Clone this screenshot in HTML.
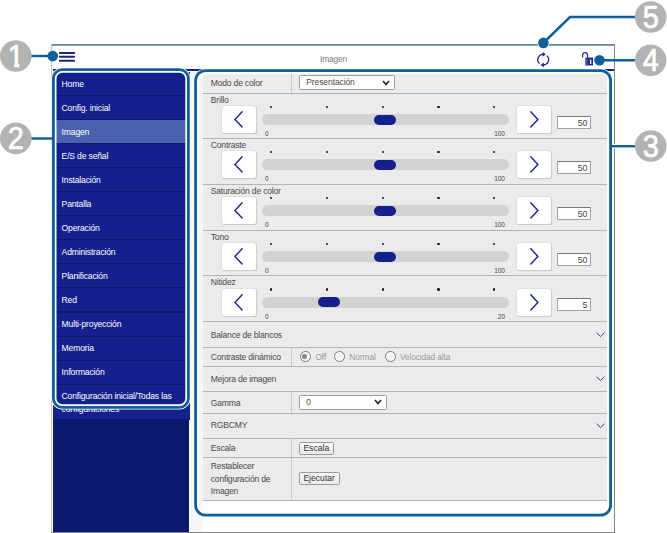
<!DOCTYPE html>
<html><head><meta charset="utf-8">
<style>
*{box-sizing:border-box;margin:0;padding:0}
html,body{width:667px;height:533px;background:#fff;overflow:hidden;font-family:"Liberation Sans",sans-serif;}
#root{position:relative;width:667px;height:533px;overflow:hidden}
.abs{position:absolute}
#frame{left:51.3px;top:44px;width:563.7px;height:488.5px;border:1px solid #8a8587;border-left:1.8px solid #c6c2bf;border-top:0;background:#fff}
#ftop{left:52px;top:44px;width:563px;height:1.7px;background:linear-gradient(#5b7a96,#8fa6be)}
#hdrline{left:53px;top:69px;width:561px;height:2.4px;background:#14208c}
#title{left:53px;top:54.3px;width:561px;text-align:center;font-size:8.4px;color:#7a7a7a;line-height:11px;letter-spacing:-0.15px}
#side{left:53.1px;top:71.5px;width:136.4px;height:460px;background:#0b1a6c}
.mi{position:absolute;left:0;width:136.5px;height:24.02px;background:#14208c;border-bottom:1px solid #0c1670;color:#fff;font-size:8.6px;line-height:10px;padding:6.7px 0 0 8.5px;white-space:nowrap;letter-spacing:-0.18px}
.mi.sel{background:#4a62ae}
#gutter{left:189.5px;top:71.5px;width:13.5px;height:460px;background:#f6f6f6}
#tbl{left:203px;top:71.5px;width:404px;height:429px;background:#ebebeb;border-radius:6px 6px 0 0}
.sep{position:absolute;left:0;width:404px;height:1px;background:#b4b4b4}
.lbl{position:absolute;left:7.8px;font-size:8.6px;letter-spacing:-0.22px;color:#4a4a4a;line-height:10px;white-space:nowrap}
.slbl{position:absolute;left:7.8px;font-size:8.6px;letter-spacing:-0.22px;color:#4a4a4a;line-height:10px;white-space:nowrap}
.btn{position:absolute;width:34.2px;height:27px;background:#fff;border-radius:2.5px;box-shadow:0 0 0 0.6px #d9d9d9,0.4px 0.9px 0.8px #bcbcbc}
.btn svg{display:block}
.track{position:absolute;left:59px;width:247px;height:11px;border-radius:5.5px;background:#d2d2d2}
.thumb{position:absolute;width:22px;height:10px;border-radius:5px;background:#14218c}
.dot{position:absolute;width:2.4px;height:2.4px;background:#1a1a1a;border-radius:50%}
.num{position:absolute;font-size:6.5px;color:#444;line-height:7px}
.inp{position:absolute;left:354px;width:34px;height:13.3px;background:#fff;border:1px solid #a2a2a2;border-top-color:#7a7a7a;border-radius:1px;font-size:8.8px;line-height:13.2px;text-align:right;padding-right:2.8px;color:#444;letter-spacing:-0.2px}
.vsep{position:absolute;left:87.7px;width:1px;background:#c9c9c9}
.sel{}
.selbox{position:absolute;left:95.8px;width:96px;height:15px;background:#fff;border:1px solid #9c9c9c;border-radius:1.5px;font-size:8.5px;line-height:13px;padding-left:6.5px;color:#4a4a4a;letter-spacing:-0.1px}
.pbtn{position:absolute;left:95.8px;height:13px;background:linear-gradient(#f8f8f8,#e9e9e9);border:1px solid #9a9a9a;border-radius:1.5px;font-size:8.6px;line-height:11px;padding:0 3.6px;color:#333}
.radio{position:absolute;width:10.6px;height:10.6px;border:1.4px solid #7e7e7e;border-radius:50%;background:#f4f4f4}
.rl{position:absolute;font-size:8.3px;color:#9a9a9a;line-height:10px;white-space:nowrap;letter-spacing:-0.1px}
.cn{font-family:"Liberation Sans",sans-serif}
</style></head><body>
<div id="root">
<div id="frame" class="abs"></div>
<div id="ftop" class="abs"></div>
<div id="title" class="abs">Imagen</div>
<div id="hdrline" class="abs"></div>
<div id="side" class="abs">
<div class="mi" style="top:0.80px">Home</div>
<div class="mi" style="top:24.82px">Config. inicial</div>
<div class="mi sel" style="top:48.84px">Imagen</div>
<div class="mi" style="top:72.86px">E/S de señal</div>
<div class="mi" style="top:96.88px">Instalación</div>
<div class="mi" style="top:120.90px">Pantalla</div>
<div class="mi" style="top:144.92px">Operación</div>
<div class="mi" style="top:168.94px">Administración</div>
<div class="mi" style="top:192.96px">Planificación</div>
<div class="mi" style="top:216.98px">Red</div>
<div class="mi" style="top:241.00px">Multi-proyección</div>
<div class="mi" style="top:265.02px">Memoria</div>
<div class="mi" style="top:289.04px">Información</div>
<div class="mi" style="top:313.06px;height:35.7px;white-space:normal;line-height:13px;padding-top:5.6px">Configuración inicial/Todas las configuraciones</div>
</div>
<div id="gutter" class="abs"></div>
<div id="tbl" class="abs">
<div class="lbl" style="top:6.0px">Modo de color</div>
<div class="vsep" style="top:0;height:21.7px"></div>
<div class="selbox" style="top:3.5px">Presentación<svg style="position:absolute;right:4px;top:3.5px" width="8" height="6" viewBox="0 0 8 6"><path d="M1 1 L4 4.5 L7 1" fill="none" stroke="#222" stroke-width="1.6"/></svg></div>
<div class="sep" style="top:21.4px"></div>
<div class="slbl" style="top:23.3px">Brillo</div>
<div class="btn" style="left:19px;top:34.9px"><svg width="34" height="27" viewBox="0 0 34 27"><path d="M20.1 5.8 L13.0 13.4 L20.1 21.0" fill="none" stroke="#1a2296" stroke-width="1.4" stroke-linecap="round"/></svg></div>
<div class="btn" style="left:313.8px;top:34.9px"><svg width="34" height="27" viewBox="0 0 34 27"><path d="M13.8 5.8 L20.9 13.4 L13.8 21.0" fill="none" stroke="#1a2296" stroke-width="1.4" stroke-linecap="round"/></svg></div>
<div class="track" style="top:42.6px"></div>
<div class="thumb" style="left:170.8px;top:43.1px"></div>
<div class="dot" style="left:66.9px;top:34.5px"></div>
<div class="dot" style="left:122.7px;top:34.5px"></div>
<div class="dot" style="left:178.5px;top:34.5px"></div>
<div class="dot" style="left:234.3px;top:34.5px"></div>
<div class="dot" style="left:290.1px;top:34.5px"></div>
<div class="num" style="left:62.0px;top:58.7px">0</div>
<div class="num" style="left:282.0px;top:58.7px;width:20px;text-align:right">100</div>
<div class="inp" style="top:44.3px">50</div>
<div class="sep" style="top:66.4px"></div>
<div class="slbl" style="top:68.3px">Contraste</div>
<div class="btn" style="left:19px;top:79.9px"><svg width="34" height="27" viewBox="0 0 34 27"><path d="M20.1 5.8 L13.0 13.4 L20.1 21.0" fill="none" stroke="#1a2296" stroke-width="1.4" stroke-linecap="round"/></svg></div>
<div class="btn" style="left:313.8px;top:79.9px"><svg width="34" height="27" viewBox="0 0 34 27"><path d="M13.8 5.8 L20.9 13.4 L13.8 21.0" fill="none" stroke="#1a2296" stroke-width="1.4" stroke-linecap="round"/></svg></div>
<div class="track" style="top:87.6px"></div>
<div class="thumb" style="left:170.8px;top:88.1px"></div>
<div class="dot" style="left:66.9px;top:79.5px"></div>
<div class="dot" style="left:122.7px;top:79.5px"></div>
<div class="dot" style="left:178.5px;top:79.5px"></div>
<div class="dot" style="left:234.3px;top:79.5px"></div>
<div class="dot" style="left:290.1px;top:79.5px"></div>
<div class="num" style="left:62.0px;top:103.7px">0</div>
<div class="num" style="left:282.0px;top:103.7px;width:20px;text-align:right">100</div>
<div class="inp" style="top:89.3px">50</div>
<div class="sep" style="top:112.4px"></div>
<div class="slbl" style="top:114.3px">Saturación de color</div>
<div class="btn" style="left:19px;top:125.9px"><svg width="34" height="27" viewBox="0 0 34 27"><path d="M20.1 5.8 L13.0 13.4 L20.1 21.0" fill="none" stroke="#1a2296" stroke-width="1.4" stroke-linecap="round"/></svg></div>
<div class="btn" style="left:313.8px;top:125.9px"><svg width="34" height="27" viewBox="0 0 34 27"><path d="M13.8 5.8 L20.9 13.4 L13.8 21.0" fill="none" stroke="#1a2296" stroke-width="1.4" stroke-linecap="round"/></svg></div>
<div class="track" style="top:133.6px"></div>
<div class="thumb" style="left:170.8px;top:134.1px"></div>
<div class="dot" style="left:66.9px;top:125.5px"></div>
<div class="dot" style="left:122.7px;top:125.5px"></div>
<div class="dot" style="left:178.5px;top:125.5px"></div>
<div class="dot" style="left:234.3px;top:125.5px"></div>
<div class="dot" style="left:290.1px;top:125.5px"></div>
<div class="num" style="left:62.0px;top:149.7px">0</div>
<div class="num" style="left:282.0px;top:149.7px;width:20px;text-align:right">100</div>
<div class="inp" style="top:135.3px">50</div>
<div class="sep" style="top:158.4px"></div>
<div class="slbl" style="top:160.3px">Tono</div>
<div class="btn" style="left:19px;top:171.9px"><svg width="34" height="27" viewBox="0 0 34 27"><path d="M20.1 5.8 L13.0 13.4 L20.1 21.0" fill="none" stroke="#1a2296" stroke-width="1.4" stroke-linecap="round"/></svg></div>
<div class="btn" style="left:313.8px;top:171.9px"><svg width="34" height="27" viewBox="0 0 34 27"><path d="M13.8 5.8 L20.9 13.4 L13.8 21.0" fill="none" stroke="#1a2296" stroke-width="1.4" stroke-linecap="round"/></svg></div>
<div class="track" style="top:179.6px"></div>
<div class="thumb" style="left:170.8px;top:180.1px"></div>
<div class="dot" style="left:66.9px;top:171.5px"></div>
<div class="dot" style="left:122.7px;top:171.5px"></div>
<div class="dot" style="left:178.5px;top:171.5px"></div>
<div class="dot" style="left:234.3px;top:171.5px"></div>
<div class="dot" style="left:290.1px;top:171.5px"></div>
<div class="num" style="left:62.0px;top:195.7px">0</div>
<div class="num" style="left:282.0px;top:195.7px;width:20px;text-align:right">100</div>
<div class="inp" style="top:181.3px">50</div>
<div class="sep" style="top:203.8px"></div>
<div class="slbl" style="top:205.7px">Nitidez</div>
<div class="btn" style="left:19px;top:217.3px"><svg width="34" height="27" viewBox="0 0 34 27"><path d="M20.1 5.8 L13.0 13.4 L20.1 21.0" fill="none" stroke="#1a2296" stroke-width="1.4" stroke-linecap="round"/></svg></div>
<div class="btn" style="left:313.8px;top:217.3px"><svg width="34" height="27" viewBox="0 0 34 27"><path d="M13.8 5.8 L20.9 13.4 L13.8 21.0" fill="none" stroke="#1a2296" stroke-width="1.4" stroke-linecap="round"/></svg></div>
<div class="track" style="top:225.0px"></div>
<div class="thumb" style="left:114.5px;top:225.5px"></div>
<div class="dot" style="left:66.9px;top:216.9px"></div>
<div class="dot" style="left:122.7px;top:216.9px"></div>
<div class="dot" style="left:178.5px;top:216.9px"></div>
<div class="dot" style="left:234.3px;top:216.9px"></div>
<div class="dot" style="left:290.1px;top:216.9px"></div>
<div class="num" style="left:62.0px;top:241.1px">0</div>
<div class="num" style="left:282.0px;top:241.1px;width:20px;text-align:right">20</div>
<div class="inp" style="top:226.7px">5</div>
<div class="sep" style="top:249.3px"></div>
<div class="lbl" style="top:258.0px">Balance de blancos</div>
<svg style="position:absolute;left:392.5px;top:260.5px" width="9" height="6" viewBox="0 0 9 6"><path d="M0.6 0.8 L4.5 4.6 L8.4 0.8" fill="none" stroke="#2a3aa6" stroke-width="1"/></svg>
<div class="sep" style="top:275.5px"></div>
<div class="lbl" style="top:280.0px">Contraste dinámico</div>
<div class="vsep" style="top:275.5px;height:19.0px"></div>
<div class="radio" style="left:97.0px;top:279.8px"><div style="position:absolute;left:1.4px;top:1.4px;width:5px;height:5px;border-radius:50%;background:#858585"></div></div>
<div class="rl" style="left:112.5px;top:280.0px">Off</div>
<div class="radio" style="left:131.0px;top:279.8px"></div>
<div class="rl" style="left:146.5px;top:280.0px">Normal</div>
<div class="radio" style="left:182.0px;top:279.8px"></div>
<div class="rl" style="left:197.0px;top:280.0px">Velocidad alta</div>
<div class="sep" style="top:294.5px"></div>
<div class="lbl" style="top:302.1px">Mejora de imagen</div>
<svg style="position:absolute;left:392.5px;top:304.5px" width="9" height="6" viewBox="0 0 9 6"><path d="M0.6 0.8 L4.5 4.6 L8.4 0.8" fill="none" stroke="#2a3aa6" stroke-width="1"/></svg>
<div class="sep" style="top:319.5px"></div>
<div class="lbl" style="top:326.0px">Gamma</div>
<div class="vsep" style="top:319.5px;height:22.0px"></div>
<div class="selbox" style="top:323.3px;width:88.3px">0<svg style="position:absolute;right:4px;top:3.5px" width="8" height="6" viewBox="0 0 8 6"><path d="M1 1 L4 4.5 L7 1" fill="none" stroke="#222" stroke-width="1.6"/></svg></div>
<div class="sep" style="top:341.5px"></div>
<div class="lbl" style="top:348.0px">RGBCMY</div>
<svg style="position:absolute;left:392.5px;top:351.5px" width="9" height="6" viewBox="0 0 9 6"><path d="M0.6 0.8 L4.5 4.6 L8.4 0.8" fill="none" stroke="#2a3aa6" stroke-width="1"/></svg>
<div class="sep" style="top:366.8px"></div>
<div class="lbl" style="top:371.5px">Escala</div>
<div class="vsep" style="top:366.8px;height:62.0px"></div>
<div class="pbtn" style="top:370.0px">Escala</div>
<div class="sep" style="top:385.5px"></div>
<div class="lbl" style="top:388.8px;line-height:12.4px;white-space:normal;width:75px">Restablecer configuración de Imagen</div>
<div class="pbtn" style="top:400.5px">Ejecutar</div>
<div class="sep" style="top:428.5px"></div>
</div>
<svg class="abs" id="ov" style="left:0;top:0" width="667" height="533" viewBox="0 0 667 533">
<defs><clipPath id="c1"><path d="M-13 -28 H13 V-3.4 H3.8 V2 H-1.7 V-3.4 H-13 Z"/></clipPath></defs>
<rect x="53.9" y="70.2" width="134.0" height="336.7" rx="8.5" fill="none" stroke="#fff" stroke-width="5.2"/><rect x="53.4" y="69.7" width="135.0" height="337.7" rx="9.0" fill="none" stroke="#0f5f9b" stroke-width="2.8"/>
<rect x="196.1" y="71.1" width="414.0" height="443.5" rx="9.5" fill="none" stroke="#fff" stroke-width="5.2"/><rect x="195.6" y="70.6" width="415.0" height="444.5" rx="10.0" fill="none" stroke="#0f5f9b" stroke-width="2.8"/>
<path d="M31 56 H52.5" stroke="#0f5f9b" stroke-width="2.4" fill="none"/><circle cx="52.7" cy="56.1" r="5.3" fill="#0f5f9b"/>
<path d="M31 138.5 H52.5" stroke="#0f5f9b" stroke-width="2.4" fill="none"/>
<path d="M612 146.2 H636" stroke="#fff" stroke-width="5" fill="none"/><path d="M611 146.2 H636" stroke="#0f5f9b" stroke-width="2.4" fill="none"/>
<path d="M636 60.2 H600" stroke="#0f5f9b" stroke-width="2.6" fill="none"/><circle cx="599.5" cy="60.2" r="5.3" fill="#0f5f9b"/>
<circle cx="543.4" cy="42.9" r="6.1" fill="#fff"/><path d="M636 17 H570 L543.4 42.9" stroke="#0f5f9b" stroke-width="2.6" fill="none"/><circle cx="543.4" cy="42.9" r="5.3" fill="#0f5f9b"/>
<circle cx="15.8" cy="56.0" r="15.8" fill="#b3b3b3"/><g transform="translate(15.8 66.7) scale(0.935 1)" clip-path="url(#c1)"><text class="cn" x="0" y="0" text-anchor="middle" font-size="31" fill="#fff" stroke="#fff" stroke-width="0.7">1</text></g>
<circle cx="15.8" cy="138.4" r="15.8" fill="#b3b3b3"/><g transform="translate(15.8 149.1) scale(0.935 1)"><text class="cn" x="0" y="0" text-anchor="middle" font-size="31" fill="#fff" stroke="#fff" stroke-width="0.7">2</text></g>
<circle cx="650.7" cy="146.0" r="15.8" fill="#b3b3b3"/><g transform="translate(650.7 156.7) scale(0.935 1)"><text class="cn" x="0" y="0" text-anchor="middle" font-size="31" fill="#fff" stroke="#fff" stroke-width="0.7">3</text></g>
<circle cx="650.7" cy="60.3" r="15.8" fill="#b3b3b3"/><g transform="translate(650.7 71.0) scale(0.935 1)"><text class="cn" x="0" y="0" text-anchor="middle" font-size="31" fill="#fff" stroke="#fff" stroke-width="0.7">4</text></g>
<circle cx="650.7" cy="17.0" r="15.8" fill="#b3b3b3"/><g transform="translate(650.7 27.7) scale(0.935 1)"><text class="cn" x="0" y="0" text-anchor="middle" font-size="31" fill="#fff" stroke="#fff" stroke-width="0.7">5</text></g>
<rect x="58.8" y="51.9" width="16.3" height="2" rx="1" fill="#1d2671"/>
<rect x="58.8" y="55.8" width="16.3" height="2" rx="1" fill="#1d2671"/>
<rect x="58.8" y="59.7" width="16.3" height="2" rx="1" fill="#1d2671"/>
<g fill="none" stroke="#1a2296" stroke-width="1.25"><path d="M539.6 63.6 A5.3 5.3 0 0 1 543.2 54.3"/><path d="M546.8 55.6 A5.3 5.3 0 0 1 543.2 64.9"/></g><path d="M542.6 51.9 L545.8 54.3 L542.6 56.7Z" fill="#1a2296"/><path d="M543.8 62.5 L540.6 64.9 L543.8 67.3Z" fill="#1a2296"/>
<path d="M582.6 57.6 V55.2 A2.5 2.6 0 0 1 587.6 55.2 V58" fill="none" stroke="#1a2296" stroke-width="1.1"/><rect x="585.4" y="57.6" width="7.6" height="7.8" fill="#1a2296"/><rect x="585.4" y="58.8" width="2.2" height="6.6" fill="#4a58b4"/><rect x="590" y="59.6" width="1.3" height="4.4" fill="#fff"/>
</svg>
</div>
</body></html>
